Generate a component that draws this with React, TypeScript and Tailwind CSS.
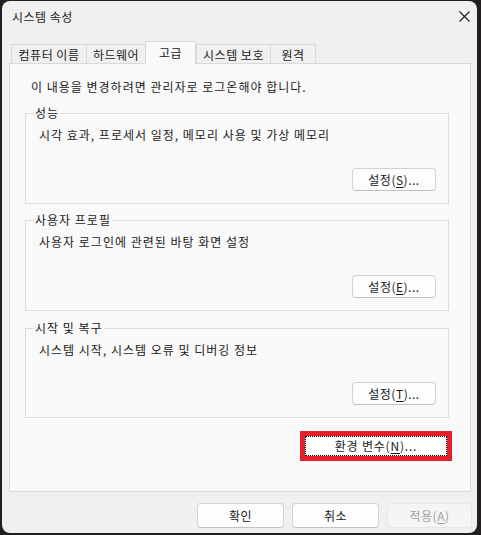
const font = "font-['Malgun_Gothic','Noto_Sans_CJK_KR','Noto_Sans',sans-serif]";

type Group = {
  title: string;
  desc: string;
  key: string;
  height: string;
  gap: string;
};

const groups: Group[] = [
  { title: "성능", desc: "시각 효과, 프로세서 일정, 메모리 사용 및 가상 메모리", key: "S", height: "h-[91px]", gap: "mt-[18px]" },
  { title: "사용자 프로필", desc: "사용자 로그인에 관련된 바탕 화면 설정", key: "E", height: "h-[91px]", gap: "mt-[16px]" },
  { title: "시작 및 복구", desc: "시스템 시작, 시스템 오류 및 디버깅 정보", key: "T", height: "h-[90px]", gap: "mt-[17px]" },
];

const CloseIcon = () => (
  <svg width="11" height="11" viewBox="0 0 11 11" fill="none">
    <path d="M0.5 0.5L10.5 10.5M10.5 0.5L0.5 10.5" stroke="#1b1b1b" strokeWidth="1.1" />
  </svg>
);

const SettingsButton = ({ mnemonic }: { mnemonic: string }) => (
  <button className="self-end mt-auto w-[84px] h-[23px] rounded-[4px] border border-[#d3d3d3] border-b-[#c2c2c2] bg-[#fdfdfd] text-[12px] leading-[16px] tracking-[0.5px] text-[#1b1b1b]">
    설정(<u className="underline-offset-2">{mnemonic}</u>)...
  </button>
);

const GroupBox = ({ group }: { group: Group }) => (
  <div className={`relative ${group.gap} ${group.height} w-[424px] border border-[#dcdcdc] flex flex-col pl-[13px] pr-[12px] pt-[13px] pb-[12px]`}>
    <span className="absolute -top-[9px] left-[8px] bg-[#f9f9f9] px-[1px] leading-[16px] tracking-[1px]">
      {group.title}
    </span>
    <p className="leading-[16px] tracking-[1px]">{group.desc}</p>
    <SettingsButton mnemonic={group.key} />
  </div>
);

const tabs = [
  { label: "컴퓨터 이름", w: "w-[75px]" },
  { label: "하드웨어", w: "w-[59px]" },
  { label: "고급", w: "w-[51px]", active: true },
  { label: "시스템 보호", w: "w-[74px]" },
  { label: "원격", w: "w-[46px]" },
];

export default function App() {
  return (
    <div className={`w-[481px] h-[535px] bg-[#231f20] pl-[2px] pt-[1px] ${font} text-[12px] text-[#1b1b1b]`}>
      <div className="w-[475px] h-[532px] rounded-[8px] bg-[#f0f0f0] flex flex-col">
        {/* title bar */}
        <div className="h-[31px] flex items-center justify-between pl-[10px] pr-[7px]">
          <span className="leading-[16px] tracking-[0.5px]">시스템 속성</span>
          <CloseIcon />
        </div>

        {/* tabs */}
        <div className="mt-[8px] pl-[9px] flex items-end h-[23px]">
          {tabs.map((t, i) =>
            t.active ? (
              <div
                key={t.label}
                className={`${t.w} h-[23px] -mb-px relative z-10 border-x border-t border-[#d9d9d9] bg-[#f9f9f9] flex justify-center pt-[3px] leading-[16px] tracking-[0.5px]`}
              >
                {t.label}
              </div>
            ) : (
              <div
                key={t.label}
                className={`${t.w} h-[19px] border-t border-l ${i === tabs.length - 1 ? "border-r" : ""} border-[#d9d9d9] bg-[#f0f0f0] flex justify-center pt-[2px] leading-[16px] tracking-[0.5px]`}
              >
                {t.label}
              </div>
            )
          )}
        </div>

        {/* tab page */}
        <div className="ml-[7px] w-[462px] h-[429px] border border-[#d9d9d9] bg-[#f9f9f9] px-[15px] pt-[15px]">
          <p className="pl-[6px] leading-[16px] tracking-[1px]">이 내용을 변경하려면 관리자로 로그온해야 합니다.</p>
          {groups.map((g) => (
            <GroupBox key={g.title} group={g} />
          ))}
          <div className="mt-[13px] ml-[275px] w-[152px] h-[30px] border-[5px] border-[#e5202a]">
            <button className="w-full h-full bg-white border border-dotted border-black text-[12px] leading-[16px] tracking-[0.8px]">
              환경 변수(<u className="underline-offset-2">N</u>)...
            </button>
          </div>
        </div>

        {/* dialog buttons */}
        <div className="mt-[11px] pl-[195px] flex gap-[8px] tracking-[0.5px]">
          <button className="w-[87px] h-[25px] rounded-[4px] border border-[#d3d3d3] border-b-[#c2c2c2] bg-[#fdfdfd] leading-[16px]">
            확인
          </button>
          <button className="w-[87px] h-[25px] rounded-[4px] border border-[#d3d3d3] border-b-[#c2c2c2] bg-[#fdfdfd] leading-[16px]">
            취소
          </button>
          <button className="w-[85px] h-[25px] rounded-[4px] border border-[#e6e6e6] bg-[#f5f5f5] text-[#a0a0a0] leading-[16px]">
            적용(<u className="underline-offset-2">A</u>)
          </button>
        </div>
      </div>
    </div>
  );
}
